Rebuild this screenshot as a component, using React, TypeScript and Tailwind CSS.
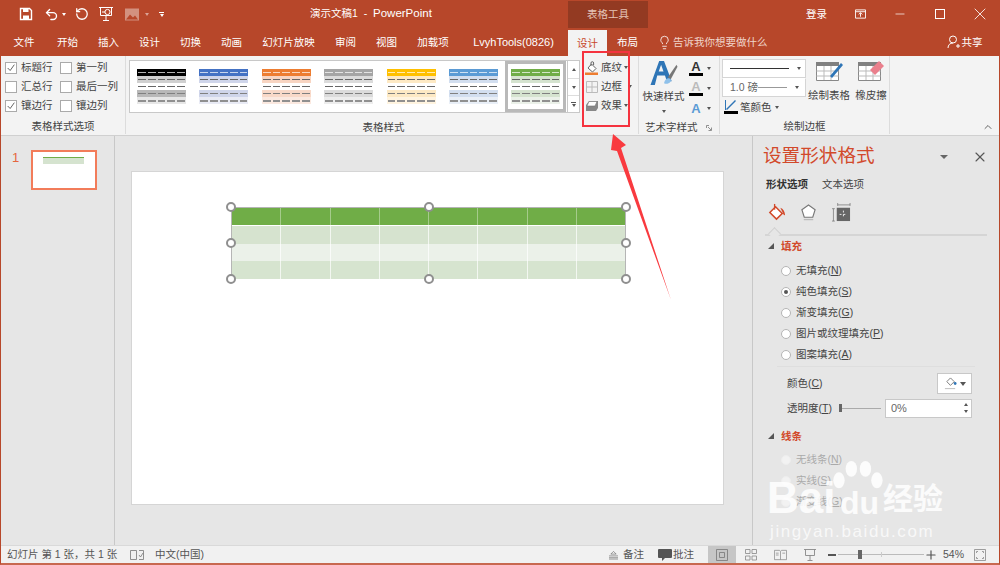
import { ChevronUp, Lightbulb, Minus, Plus, RotateCcw, Undo2, X } from "lucide-react"

const CJK = "font-['Liberation_Sans','Noto_Sans_CJK_SC',sans-serif]"

const tabs = [
  { label: "文件", w: "w-[46px]" },
  { label: "开始", w: "w-[41px]" },
  { label: "插入", w: "w-[41px]" },
  { label: "设计", w: "w-[41px]" },
  { label: "切换", w: "w-[41px]" },
  { label: "动画", w: "w-[41px]" },
  { label: "幻灯片放映", w: "w-[73px]" },
  { label: "审阅", w: "w-[41px]" },
  { label: "视图", w: "w-[41px]" },
  { label: "加载项", w: "w-[52px]" },
  { label: "LvyhTools(0826)", w: "w-[109px]" },
]

const styles = [
  { head: "bg-[#000000]", band: "bg-[#d0d0d0]", soft: "bg-[#e7e7e7]", mid: "bg-[#b8b8b8]" },
  { head: "bg-[#4472c4]", band: "bg-[#cfd5ea]", soft: "bg-[#e9ebf5]", mid: "bg-[#cfd5ea]" },
  { head: "bg-[#ed7d31]", band: "bg-[#f8d5c2]", soft: "bg-[#fbe9e0]", mid: "bg-[#f9d9c8]" },
  { head: "bg-[#a5a5a5]", band: "bg-[#dbdbdb]", soft: "bg-[#ededed]", mid: "bg-[#dbdbdb]" },
  { head: "bg-[#ffc000]", band: "bg-[#fde9c4]", soft: "bg-[#fff4e0]", mid: "bg-[#fde9c4]" },
  { head: "bg-[#5b9bd5]", band: "bg-[#d2deef]", soft: "bg-[#e9eff7]", mid: "bg-[#d2deef]" },
  { head: "bg-[#70ad47]", band: "bg-[#d5e3cf]", soft: "bg-[#ebf1e9]", mid: "bg-[#d5e3cf]" },
]

const COLS = [0, 1, 2, 3, 4]
const TABLE_COLS = [0, 1, 2, 3, 4, 5, 6, 7]

function StyleRow({ bg, dash, thin }: { bg: string; dash: string; thin?: boolean }) {
  return (
    <div className={`flex h-[7.2px] items-center justify-between gap-[2px] px-[1px] ${bg}`}>
      {COLS.map((c) => (
        <div key={c} className={`flex-1 ${thin ? "h-px" : "h-[1.5px]"} ${dash}`} />
      ))}
    </div>
  )
}

function StyleThumb({ s }: { s: (typeof styles)[number] }) {
  return (
    <div className="w-[49px] shrink-0">
      <StyleRow bg={s.head} dash="bg-white/70" thin />
      <StyleRow bg={s.band} dash="bg-[#666]" />
      <StyleRow bg="bg-white" dash="bg-[#666]" />
      <StyleRow bg={s.mid} dash="bg-[#808080]" />
      <StyleRow bg={s.soft} dash="bg-[#909090]" />
    </div>
  )
}

function Check({ label, on }: { label: string; on?: boolean }) {
  return (
    <div className="flex h-[19px] items-center gap-[4px] whitespace-nowrap">
      <div className="flex h-[12px] w-[12px] shrink-0 items-center justify-center border border-[#aaa] bg-white">
        {on && (
          <svg viewBox="0 0 12 12" className="h-[10px] w-[10px]">
            <path d="M2 6l3 3 5-7" fill="none" stroke="#555" strokeWidth="1.1" />
          </svg>
        )}
      </div>
      <span>{label}</span>
    </div>
  )
}

function Caret({ className = "" }: { className?: string }) {
  return <span className={`inline-block shrink-0 border-x-[2.5px] border-t-[3px] border-x-transparent border-t-[#555] ${className}`} />
}

function Radio({ label, hot, on, off }: { label: string; hot: string; on?: boolean; off?: boolean }) {
  return (
    <div className="flex h-[21px] items-center pl-[28px]">
      <div className={`flex h-[10px] w-[10px] items-center justify-center rounded-full border ${off ? "border-[#eee] bg-[#f2f2f2]" : "border-[#b5b5b5] bg-white"}`}>
        {on && <div className="h-[4px] w-[4px] rounded-full bg-[#555]" />}
      </div>
      <span className={`ml-[5px] ${off ? "text-[#aaa]" : ""}`}>
        {label}(<span className="underline">{hot}</span>)
      </span>
    </div>
  )
}

function Section({ label }: { label: string }) {
  return (
    <div className="flex h-[16px] items-center gap-[7px] pl-[15px]">
      <svg viewBox="0 0 6 6" className="h-[6px] w-[6px]">
        <path d="M6 0v6H0z" fill="#555" />
      </svg>
      <span className="font-bold text-[#d2492a]">{label}</span>
    </div>
  )
}

function Handle({ className }: { className: string }) {
  return <div className={`absolute h-[10px] w-[10px] rounded-full border-[2px] border-[#8f8f8f] bg-white ${className}`} />
}

function Bucket({ className = "" }: { className?: string }) {
  return (
    <svg viewBox="0 0 14 14" className={className}>
      <path d="M6.500 3l4.500 4.500-3.500 3.500L3 7z" fill="white" stroke="#666" />
      <path d="M6 5V2a1.300 1.300 0 0 1 2.600 0v2" fill="none" stroke="#666" />
      <path d="M0 11.500h13V14H0z" fill="#ed7d31" />
    </svg>
  )
}

function TableIcon({ children }: { children: React.ReactNode }) {
  return (
    <svg viewBox="0 0 28 24" className="h-[24px] w-[28px]" fill="none">
      <path d="M1.500 3.500h22v18h-22z" fill="white" stroke="#888" />
      <path d="M1 3h23v4H1z" fill="#808080" />
      <path d="M1.500 12h22M1.500 17h22M9 7v14M16 7v14" stroke="#bbb" />
      {children}
    </svg>
  )
}

export default function App() {
  return (
    <div className={`relative flex h-[565px] w-[1000px] flex-col overflow-hidden whitespace-nowrap border-x border-b-[2px] border-x-[#b7472a] border-b-[#c8684f] bg-[#e6e6e6] text-[10.5px] leading-none text-[#444] ${CJK}`}>
      {/* title bar */}
      <div className="flex h-[28px] shrink-0 items-center bg-[#b7472a] text-white">
        <div className="flex w-[309px] shrink-0 items-center pl-[18px]">
          <svg viewBox="0 0 14 14" className="h-[14px] w-[14px]">
            <path d="M1.500 1.500h9l2 2v9h-11z" fill="none" stroke="white" strokeWidth="1.4" />
            <path d="M4 1.500h5.500V5H4zM4 12.500V8.500h6v4" fill="white" />
          </svg>
          <Undo2 className="ml-[11px] h-[15px] w-[15px]" strokeWidth={2.2} />
          <Caret className="ml-[3px] border-t-white" />
          <RotateCcw className="ml-[9px] h-[14px] w-[14px]" strokeWidth={2.2} />
          <svg viewBox="0 0 16 16" className="ml-[9px] h-[16px] w-[16px]" fill="none" stroke="white">
            <path d="M1 1.500h14M2.500 2v7.500h11V2M8 10v4M5 14.500h6" />
            <circle cx="9.500" cy="6" r="2.600" />
            <path d="M4 6h3" />
          </svg>
          <svg viewBox="0 0 14 12" className="ml-[11px] h-[13px] w-[14px] opacity-40">
            <path d="M0 0h14v12H0z" fill="white" />
            <path d="M1 11l4-5 3 3 2-2 3 4z" fill="#b7472a" />
          </svg>
          <Caret className="ml-[6px] border-t-white/50" />
          <div className="ml-[10px] flex flex-col items-center gap-px">
            <div className="h-px w-[5px] bg-white" />
            <Caret className="border-t-white" />
          </div>
        </div>
        <div className="w-[258px] shrink-0">
          演示文稿1&nbsp; - &nbsp;<span className="text-[11.5px]">PowerPoint</span>
        </div>
        <div className="mt-[1px] flex h-[27px] w-[80px] shrink-0 items-center justify-center bg-[#933a22] text-[#e5c5b8]">表格工具</div>
        <div className="ml-[158px] w-[40px] shrink-0">登录</div>
        <svg viewBox="0 0 12 10" className="ml-[9px] h-[10px] w-[11px] shrink-0" fill="none" stroke="white">
          <path d="M.5.500h11v9H.5zM.5 2.500h11M6 8V4M4 5.500l2-2 2 2" />
        </svg>
        <Minus className="ml-[27px] h-[14px] w-[14px] shrink-0" strokeWidth={1.2} />
        <div className="ml-[28px] h-[10px] w-[10px] shrink-0 border border-white" />
        <X className="ml-[25px] h-[20px] w-[20px] shrink-0" strokeWidth={1} />
      </div>

      {/* tab row */}
      <div className="flex h-[28px] shrink-0 items-center bg-[#b7472a] text-white">
        {tabs.map((t) => (
          <div key={t.label} className={`shrink-0 text-center ${t.w} ${t.label.startsWith("Lvyh") ? "font-['Liberation_Sans','Noto_Sans',sans-serif] text-[11px]" : ""}`}>
            {t.label}
          </div>
        ))}
        <div className="flex h-[26px] w-[39px] shrink-0 translate-y-[1px] items-center justify-center bg-[#f3f3f3] text-[#c8482a]">设计</div>
        <div className="w-[41px] shrink-0 text-center">布局</div>
        <Lightbulb className="ml-[9px] h-[15px] w-[15px] shrink-0" strokeWidth={1.3} />
        <div className="ml-[1px] shrink-0 text-[#f0d5ca]">告诉我你想要做什么</div>
        <svg viewBox="0 0 14 14" className="ml-[179px] h-[14px] w-[14px] shrink-0" fill="none" stroke="white">
          <circle cx="6" cy="4.500" r="3.500" />
          <path d="M1 13c0-3 2-5 5-5M9 11h4M11 9v4" />
        </svg>
        <div className="ml-[1px] shrink-0">共享</div>
      </div>

      {/* ribbon */}
      <div className="flex h-[79px] shrink-0 bg-[#f3f3f3]">
        <div className="flex h-[78px] w-[125px] shrink-0 flex-col border-r border-[#dcdcdc] pt-[2px]">
          <div className="flex flex-1 gap-[8px] pl-[4px]">
            <div className="flex w-[47px] flex-col">
              <Check label="标题行" on />
              <Check label="汇总行" />
              <Check label="镶边行" on />
            </div>
            <div className="flex flex-col">
              <Check label="第一列" />
              <Check label="最后一列" />
              <Check label="镶边列" />
            </div>
          </div>
          <div className="h-[13px] text-center">表格样式选项</div>
        </div>

        <div className="flex h-[78px] w-[456px] shrink-0 flex-col pl-[3px] pt-[4px]">
          <div className="flex">
            <div className="flex h-[53px] w-[439px] items-center gap-[13.4px] border border-[#c8c8c8] bg-white pl-[7px]">
              {styles.slice(0, 6).map((s) => (
                <StyleThumb key={s.head} s={s} />
              ))}
              <div className="-ml-[6px] flex h-[51px] w-[61px] shrink-0 items-center justify-center border-[3px] border-[#b9b9b9]">
                <StyleThumb s={styles[6]} />
              </div>
            </div>
            <div className="flex w-[12px] flex-col border-y border-r border-[#c8c8c8] bg-white">
              <div className="flex h-[17px] items-center justify-center"><Caret className="rotate-180" /></div>
              <div className="flex h-[18px] items-center justify-center border-y border-[#ddd]"><Caret /></div>
              <div className="flex h-[16px] flex-col items-center justify-center gap-px"><div className="h-px w-[5px] bg-[#555]" /><Caret /></div>
            </div>
          </div>
          <div className="mt-[9px] pl-[56px] text-center">表格样式</div>
        </div>

        <div className="flex h-[78px] w-[57px] shrink-0 flex-col border-r border-[#dcdcdc] pl-[3px] pt-[2px]">
          <div className="flex h-[19px] items-center">
            <Bucket className="h-[14px] w-[14px] shrink-0" />
            <span className="ml-[2px]">底纹</span>
            <Caret className="ml-[2px]" />
          </div>
          <div className="flex h-[19px] items-center">
            <svg viewBox="0 0 12 12" className="ml-[1px] h-[12px] w-[12px] shrink-0" fill="none" stroke="#bbb">
              <path d="M.5.500h11v11H.5zM6 .500v11M.5 6h11" />
            </svg>
            <span className="ml-[3px]">边框</span>
            <Caret className="ml-[6px]" />
          </div>
          <div className="flex h-[19px] items-center">
            <svg viewBox="0 0 14 12" className="h-[12px] w-[14px] shrink-0">
              <path d="M4 1h9v7l-2 3H1V5z" fill="#888" />
              <path d="M4 1.500h8L10 6H2z" fill="white" stroke="#777" strokeWidth=".6" />
            </svg>
            <span className="ml-[2px]">效果</span>
            <Caret className="ml-[2px]" />
          </div>
        </div>

        <div className="flex h-[78px] w-[81px] shrink-0 flex-col border-r border-[#dcdcdc] pt-[4px]">
          <div className="flex flex-1">
            <div className="flex w-[49px] shrink-0 flex-col items-center">
              <svg viewBox="0 0 28 28" className="h-[27px] w-[28px]">
                <path d="M0 26L9 1h5l8 21h-5l-2-6H7l-2.500 10zM8.500 12h5L11 5z" fill="#2e75b6" />
                <path d="M18 18L27 5l1 2-7 13z" fill="#777" />
                <path d="M14 24c1-5 5-6 7-4 1 3-3 6-7 4z" fill="#8fc1ea" />
              </svg>
              <div className="mt-[4px]">快速样式</div>
              <Caret className="mt-[8px]" />
            </div>
            <div className="-mt-[2px] flex flex-col">
              {["text-[#333]", "text-[#bbb]", "text-[#5b9bd5]"].map((c, i) => (
                <div key={c} className="flex h-[20px] items-center">
                  <div className="flex w-[16px] flex-col items-center">
                    <span className={`text-[13px] font-bold ${c}`}>A</span>
                    {i < 2 && <div className="h-[3px] w-[14px] bg-black" />}
                  </div>
                  <Caret className="ml-[3px]" />
                </div>
              ))}
            </div>
          </div>
          <div className="flex h-[13px] items-center pl-[6px]">
            <span>艺术字样式</span>
            <svg viewBox="0 0 6 6" className="ml-[8px] h-[6px] w-[6px]" fill="none" stroke="#777">
              <path d="M.5 3V.5H3M2 2l3 3M5.500 2.500v3h-3" strokeWidth=".8" />
            </svg>
          </div>
        </div>

        <div className="flex h-[78px] w-[170px] shrink-0 flex-col border-r border-[#dcdcdc] pt-[3px]">
          <div className="flex flex-1">
            <div className="ml-[2px] flex w-[84px] shrink-0 flex-col">
              <div className="flex h-[19px] items-center border border-[#d5d5d5] bg-white pl-[7px]">
                <div className="h-px w-[59px] bg-[#333]" />
                <Caret className="ml-[8px]" />
              </div>
              <div className="flex h-[19px] items-center border border-x-[#d5d5d5] border-b-[#d5d5d5] border-t-transparent bg-white pl-[7px] text-[#666]">
                <span>1.0 磅</span>
                <div className="h-px w-[29px] bg-[#999]" />
                <Caret className="ml-[8px]" />
              </div>
              <div className="flex h-[20px] items-center pl-[2px]">
                <svg viewBox="0 0 14 14" className="h-[14px] w-[14px]">
                  <path d="M0 11h14v3H0z" fill="black" />
                  <path d="M1 0h1v10H1zM2 9l9-9 1 1-9 9z" fill="#2e75b6" />
                </svg>
                <span className="ml-[2px]">笔颜色</span>
                <Caret className="ml-[3px]" />
              </div>
            </div>
            <div className="ml-[1px] flex w-[44px] shrink-0 flex-col items-center">
              <TableIcon>
                <path d="M15 17L26 4l2 2-11 13z" fill="#2e75b6" />
              </TableIcon>
              <div className="mt-[7px]">绘制表格</div>
            </div>
            <div className="flex w-[40px] shrink-0 flex-col items-center">
              <TableIcon>
                <path d="M13 11l9-9 5 5-9 9z" fill="#ea7f8c" />
              </TableIcon>
              <div className="mt-[7px]">橡皮擦</div>
            </div>
          </div>
          <div className="h-[13px] text-center">绘制边框</div>
        </div>

        <div className="flex flex-1 items-end justify-end pb-[2px] pr-[5px]">
          <ChevronUp className="h-[12px] w-[12px] text-[#666]" />
        </div>
      </div>

      {/* main */}
      <div className="flex min-h-0 flex-1 border-t border-[#d0d0d0]">
        <div className="flex w-[114px] shrink-0 border-r border-[#c8c8c8] pl-[11px] pt-[14px]">
          <div className="mt-[1px] w-[19px] text-[13px] text-[#e5663f]">1</div>
          <div className="h-[40px] w-[66px] border-[2px] border-[#f27c5a] bg-white pl-[10px] pt-[5px]">
            <div className="h-[1px] w-[41px] bg-[#70ad47]" />
            <div className="h-[6px] w-[41px] bg-[#d5e3cf]" />
          </div>
        </div>

        <div className="flex-1 pl-[16px] pt-[35px]">
          <div className="h-[334px] w-[593px] border border-[#d5d5d5] bg-white pl-[99px] pt-[35px]">
            <div className="relative h-[72px] w-[395px] border border-[#b5b5b5]">
              <div className="flex h-[17px] bg-[#70ad47]">
                {TABLE_COLS.map((c) => (
                  <div key={c} className="flex-1 border-r border-[#a5cb8b] last:border-r-0" />
                ))}
              </div>
              <div className="h-px bg-white" />
              {["bg-[#d6e3cf]", "bg-[#ebf1e9]", "bg-[#d6e4cf]"].map((bg) => (
                <div key={bg} className={`flex h-[17.6px] ${bg}`}>
                  {TABLE_COLS.map((c) => (
                    <div key={c} className="flex-1 border-r border-white/70 last:border-r-0" />
                  ))}
                </div>
              ))}
              <Handle className="-left-[6px] -top-[6px]" />
              <Handle className="left-[192px] -top-[6px]" />
              <Handle className="-right-[6px] -top-[6px]" />
              <Handle className="-left-[6px] top-[30px]" />
              <Handle className="-right-[6px] top-[30px]" />
              <Handle className="-left-[6px] -bottom-[6px]" />
              <Handle className="left-[192px] -bottom-[6px]" />
              <Handle className="-right-[6px] -bottom-[6px]" />
            </div>
          </div>
        </div>

        {/* format pane */}
        <div className="flex w-[247px] shrink-0 flex-col border-l border-[#c8c8c8] bg-[#e6e6e6]">
          <div className="flex h-[41px] shrink-0 items-center pl-[10px]">
            <span className="w-[177px] text-[18.6px] text-[#d2492a]">设置形状格式</span>
            <Caret className="border-x-[4px] border-t-[4px] border-t-[#666]" />
            <X className="ml-[24px] h-[16px] w-[16px] text-[#555]" strokeWidth={1.6} />
          </div>
          <div className="flex h-[14px] shrink-0 items-center pl-[13px]">
            <span className="font-bold text-[#333]">形状选项</span>
            <span className="ml-[14px]">文本选项</span>
          </div>
          <div className="flex h-[43px] shrink-0 items-center pl-[14px]">
            <svg viewBox="0 0 20 20" className="h-[19px] w-[19px]" fill="none">
              <path d="M9 4l7 7-6 6-7-7z" fill="white" stroke="#d2492a" strokeWidth="1.6" />
              <path d="M8 1v6" stroke="#d2492a" strokeWidth="1.4" />
              <path d="M14 5c3 1 5 4 5 8-2 0-2-2-3-4z" fill="#d2492a" />
            </svg>
            <svg viewBox="0 0 18 20" className="ml-[14px] h-[19px] w-[17px]" fill="none">
              <path d="M9 2l7 5-2.500 8h-9L2 7z" fill="white" stroke="#777" strokeWidth="1.2" />
              <path d="M4 17.500h10" stroke="#bbb" strokeWidth="1.4" />
            </svg>
            <svg viewBox="0 0 20 20" className="ml-[15px] h-[19px] w-[19px]" fill="none">
              <path d="M6 2h13M1.500 6v13M0 6h3M0 19h3M6 0v3M19 0v3" stroke="#777" strokeWidth=".8" />
              <path d="M5 5h14v14H5z" fill="#666" />
              <path d="M12 8v8M8 12h8" stroke="white" strokeWidth=".9" strokeDasharray="2 2" />
            </svg>
          </div>
          <div className="relative mx-[12px] h-[2px] shrink-0 bg-[#d5d5d5]">
            <div className="absolute left-[5px] -top-[5px] h-[9px] w-[9px] rotate-45 border-l border-t border-[#cfcfcf] bg-[#e6e6e6]" />
          </div>
          <div className="mt-[2px]">
            <Section label="填充" />
            <div className="mt-[6px]">
              <Radio label="无填充" hot="N" />
              <Radio label="纯色填充" hot="S" on />
              <Radio label="渐变填充" hot="G" />
              <Radio label="图片或纹理填充" hot="P" />
              <Radio label="图案填充" hot="A" />
            </div>
          </div>
          <div className="mx-[24px] mt-[1px] h-px shrink-0 bg-[#dedede]" />
          <div className="mt-[6px] flex h-[21px] shrink-0 items-center justify-between pl-[34px] pr-[27px]">
            <span>颜色(<span className="underline">C</span>)</span>
            <div className="flex h-[21px] w-[35px] items-center justify-center gap-[3px] border border-[#c8c8c8] bg-white">
              <svg viewBox="0 0 14 14" className="h-[13px] w-[13px]" fill="none">
                <path d="M7 1l4 4-4 4-4-4z" stroke="#777" />
                <path d="M1 12.500h11" stroke="#bbb" />
                <circle cx="12" cy="7" r="1.500" fill="#2e75b6" />
              </svg>
              <Caret className="border-x-[3px] border-t-[4px]" />
            </div>
          </div>
          <div className="mt-[4px] flex h-[20px] shrink-0 items-center pl-[34px]">
            <span className="w-[52px]">透明度(<span className="underline">T</span>)</span>
            <div className="relative h-px w-[42px] bg-[#aaa]">
              <div className="absolute left-0 -top-[4px] h-[8px] w-[3px] bg-[#666]" />
            </div>
            <div className="ml-[4px] flex h-[19px] w-[87px] items-center justify-between border border-[#c8c8c8] bg-white pl-[5px] pr-[3px] text-[11px] text-[#666]">
              <span>0%</span>
              <div className="flex flex-col gap-[4px]">
                <Caret className="rotate-180" />
                <Caret />
              </div>
            </div>
          </div>
          <div className="mt-[10px]">
            <Section label="线条" />
            <div className="mt-[5px]">
              <Radio label="无线条" hot="N" off />
              <Radio label="实线" hot="S" off />
              <Radio label="渐变线" hot="G" off />
            </div>
          </div>
        </div>
      </div>

      {/* status bar */}
      <div className="flex h-[18px] shrink-0 items-center border-t border-[#d9d9d9] bg-[#f1f1f1] pl-[6px] text-[#555]">
        <span className="w-[123px] shrink-0">幻灯片 第 1 张，共 1 张</span>
        <svg viewBox="0 0 14 12" className="h-[12px] w-[14px] shrink-0" fill="none" stroke="#777">
          <path d="M.5 1.500h6v9h-6zM9 1.500h4.500v9H9M9 6l1.500 2 2.500-4" strokeWidth=".8" />
        </svg>
        <span className="ml-[11px] w-[48px] shrink-0">中文(中国)</span>
        <svg viewBox="0 0 10 10" className="ml-[406px] h-[10px] w-[9px] shrink-0" fill="none" stroke="#666">
          <path d="M5 1L2 4h6zM0 6h10M0 8h10M0 9.500h10" strokeWidth=".7" />
        </svg>
        <span className="ml-[5px] w-[21px] shrink-0">备注</span>
        <svg viewBox="0 0 14 12" className="ml-[14px] h-[12px] w-[14px] shrink-0">
          <path d="M1 0h12a1 1 0 0 1 1 1v7a1 1 0 0 1-1 1H7l-3 3V9H1a1 1 0 0 1-1-1V1a1 1 0 0 1 1-1z" fill="#555" />
        </svg>
        <span className="ml-[1px] w-[21px] shrink-0">批注</span>
        <div className="ml-[14px] flex h-[17px] w-[28px] shrink-0 items-center justify-center bg-[#c6c6c6]">
          <svg viewBox="0 0 12 12" className="h-[12px] w-[12px]" fill="none" stroke="#777">
            <path d="M.5.500h11v11H.5zM3.500 3.500h5v5h-5z" strokeWidth=".8" />
          </svg>
        </div>
        <svg viewBox="0 0 12 12" className="ml-[9px] h-[12px] w-[12px] shrink-0" fill="none" stroke="#888">
          <path d="M.5.500H5v4H.5zM7 .500h4.500v4H7zM.5 7H5v4H.5zM7 7h4.500v4H7z" strokeWidth=".8" />
        </svg>
        <svg viewBox="0 0 14 12" className="ml-[17px] h-[12px] w-[13px] shrink-0" fill="none" stroke="#888">
          <path d="M.5 1H6l1 1 1-1h5.500v10H.5zM7 2v9M2 4h3M2 6h3M9 4h3" strokeWidth=".8" />
        </svg>
        <svg viewBox="0 0 12 12" className="ml-[17px] h-[12px] w-[12px] shrink-0" fill="none" stroke="#888">
          <path d="M0 .500h12M1.500.500v6h9v-6M6 6.500V11M3.500 11.500h5" strokeWidth=".9" />
        </svg>
        <div className="ml-[12px] h-[2px] w-[8px] shrink-0 bg-[#555]" />
        <div className="relative ml-[2px] h-px w-[86px] shrink-0 bg-[#bbb]">
          <div className="absolute left-[20px] -top-[4px] h-[9px] w-[4px] bg-[#666]" />
          <div className="absolute left-[43px] -top-[2px] h-[5px] w-px bg-[#ccc]" />
        </div>
        <Plus className="h-[14px] w-[14px] shrink-0 text-[#555]" strokeWidth={2} />
        <span className="ml-[5px] w-[21px] shrink-0">54%</span>
        <svg viewBox="0 0 12 12" className="ml-[10px] h-[12px] w-[12px] shrink-0" fill="none" stroke="#888">
          <path d="M.5.500h11v11H.5zM2.500 4V2.500H4M8 2.500h1.500V4M9.500 8v1.500H8M4 9.500H2.500V8" strokeWidth=".8" />
        </svg>
      </div>

      {/* red annotation */}
      <div className="absolute left-[581px] top-[51px] h-[76px] w-[48px] border-[2px] border-[#f5333f]" />
      <svg viewBox="0 0 1000 565" className="pointer-events-none absolute -left-px top-0 h-[565px] w-[1000px]">
        <path d="M613 134L626 145 621 148 671 300 617 151 611 150z" fill="#f93a3f" />
      </svg>

      {/* watermark */}
      <div className="pointer-events-none absolute left-[766px] top-[458px] h-[90px] w-[190px] text-white/85">
        <span className="absolute left-0 top-[18px] text-[44px] font-bold leading-[44px]">Bai</span>
        <svg viewBox="0 0 60 34" className="absolute left-[63px] top-[2px] h-[30px] w-[55px]" fill="white" fillOpacity="0.85">
          <ellipse cx="9" cy="23" rx="6.500" ry="9" />
          <ellipse cx="23" cy="10" rx="6.500" ry="9" />
          <ellipse cx="39" cy="10" rx="6.500" ry="9" />
          <ellipse cx="52" cy="23" rx="6.500" ry="9" />
        </svg>
        <span className="absolute left-[73px] top-[30px] text-[32px] font-bold leading-[30px]">du</span>
        <span className="absolute left-[116px] top-[26px] text-[30px] font-bold leading-[30px]">经验</span>
        <span className="absolute left-[3px] top-[64px] text-[17px] leading-[20px] tracking-[1.6px] text-white/75">jingyan.baidu.com</span>
      </div>
    </div>
  )
}
